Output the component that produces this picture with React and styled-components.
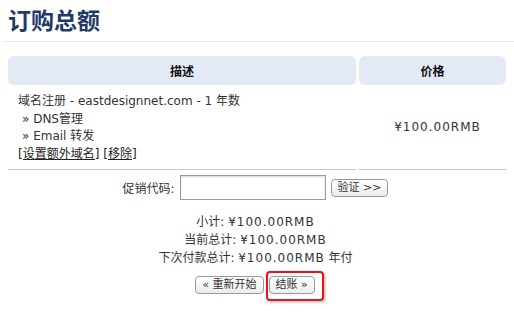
import React from "react";
import styled, { createGlobalStyle } from "styled-components";

const Global = createGlobalStyle`
    html, body {
        margin: 0;
        padding: 0;
        background: #fff;
    }
    body {
        font-family: "DejaVu Sans", "Noto Sans CJK SC", sans-serif;
        font-size: 12px;
        color: #333;
    }
`;

const Page = styled.div`
    width: 514px;
    height: 316px;
    padding: 0 8px 0 5px;
    box-sizing: border-box;
    overflow: hidden;
`;

const Title = styled.h1`
    margin: 0 -8px 0 0;
    padding: 5px 0 0 3px;
    height: 42px;
    box-sizing: border-box;
    font-family: "Noto Sans CJK SC", sans-serif;
    font-size: 23px;
    line-height: 28px;
    font-weight: 700;
    color: #1f3a68;
    border-bottom: 1px solid #e2e2e2;
`;

const Table = styled.table`
    width: 504px;
    margin-top: 11px;
    border-collapse: separate;
    border-spacing: 3px;
`;

const Head = styled.th`
    height: 29px;
    padding: 0;
    background: #e4e9f7;
    border-radius: 6px;
    font-weight: 700;
    font-size: 12px;
    color: #111;
    text-align: center;
    width: ${(p) => p.$w};
`;

const Cell = styled.td`
    padding: 5px 0 6px 10px;
    border-bottom: 1px solid #c8c8c8;
    line-height: 17.5px;
    text-align: ${(p) => (p.$center ? "center" : "left")};
    vertical-align: middle;
`;

const Addon = styled.div`
    padding-left: 4px;
`;

const Link = styled.a`
    color: #222;
    text-decoration: underline;
    cursor: pointer;
`;

const Price = styled.span`
    letter-spacing: 1px;
`;

const Promo = styled.div`
    display: flex;
    justify-content: center;
    align-items: center;
    gap: 5px;
    margin-top: 2px;
`;

const Input = styled.input`
    width: 146px;
    height: 25px;
    box-sizing: border-box;
    border: 1px solid #9a9a9a;
    box-shadow: inset 0 1px 2px rgba(0, 0, 0, 0.15);
    margin: 0;
`;

const Button = styled.button`
    height: 18px;
    padding: 0 6px;
    margin: 0;
    font-family: "DejaVu Sans", "Noto Sans CJK SC", sans-serif;
    font-size: 11px;
    color: #333;
    background: linear-gradient(#ffffff, #ececec);
    border: 1px solid #9a9a9a;
    border-radius: 4px;
    line-height: 16px;
`;

const Totals = styled.div`
    margin-top: 13px;
    text-align: center;
    line-height: 18px;
`;

const Actions = styled.div`
    display: flex;
    justify-content: center;
    align-items: flex-start;
    gap: 2px;
    margin-top: 9px;
    padding-left: 8px;
`;

const Highlight = styled.span`
    display: inline-block;
    margin-top: -5px;
    padding: 3px 7px 5px 1px;
    border: 2px solid #e3141c;
    border-radius: 4px;
    box-shadow: 1px 1px 3px rgba(0, 0, 0, 0.35);
`;

export default function App() {
    return (
        <Page>
            <Global />
            <Title>订购总额</Title>
            <Table>
                <thead>
                    <tr>
                        <Head $w="348px">描述</Head>
                        <Head $w="147px">价格</Head>
                    </tr>
                </thead>
                <tbody>
                    <tr>
                        <Cell>
                            域名注册 - eastdesignnet.com - 1 年数
                            <Addon>» DNS管理</Addon>
                            <Addon>» Email 转发</Addon>
                            <Link>[设置额外域名]</Link> <Link>[移除]</Link>
                        </Cell>
                        <Cell $center>
                            <Price>¥100.00RMB</Price>
                        </Cell>
                    </tr>
                </tbody>
            </Table>
            <Promo>
                <span>促销代码:</span>
                <Input />
                <Button>验证 &gt;&gt;</Button>
            </Promo>
            <Totals>
                <div>小计: <Price>¥100.00RMB</Price></div>
                <div>当前总计: <Price>¥100.00RMB</Price></div>
                <div>下次付款总计: <Price>¥100.00RMB</Price> 年付</div>
            </Totals>
            <Actions>
                <Button>« 重新开始</Button>
                <Highlight>
                    <Button>结账 »</Button>
                </Highlight>
            </Actions>
        </Page>
    );
}
